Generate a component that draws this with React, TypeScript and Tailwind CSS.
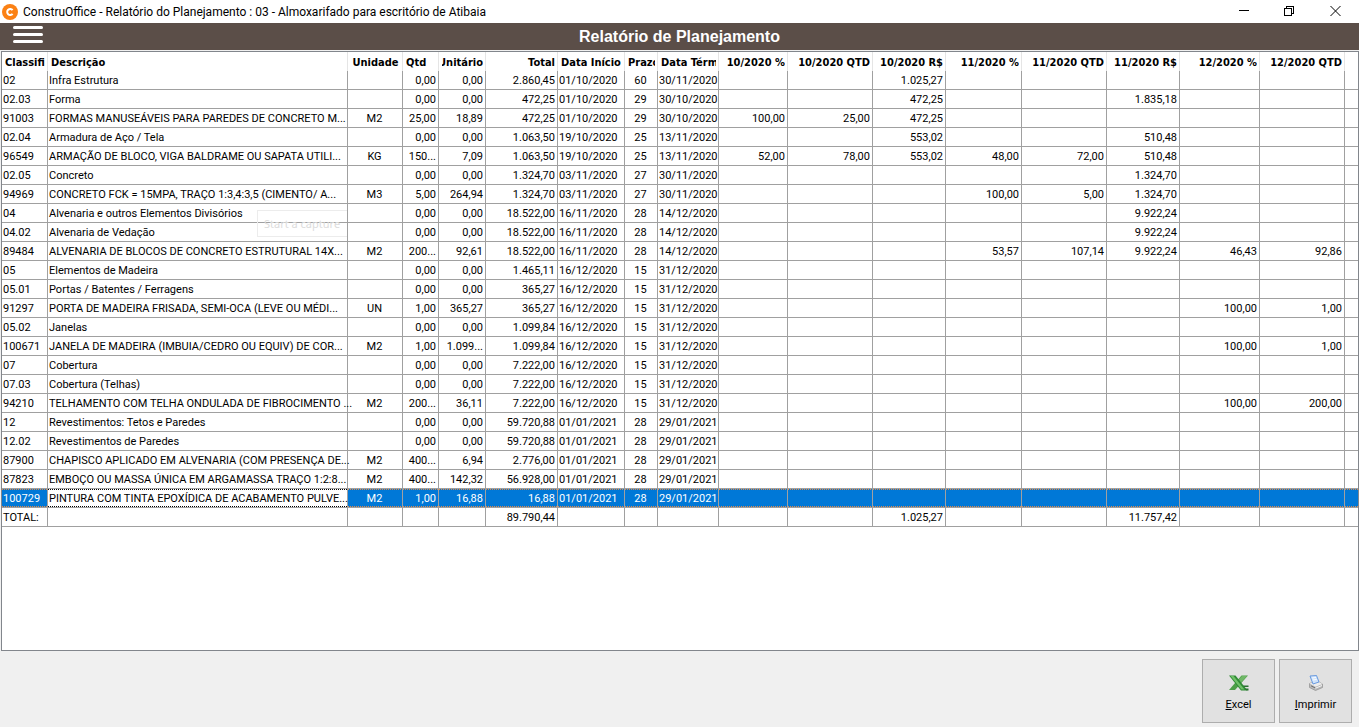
import React, { useState } from 'react';

type Align = 'left' | 'center' | 'right';

interface Column {
  title: string;
  width: string;
  align: Align;
  headAlign: Align;
}

const columns: Column[] = [
  { title: 'Classifi', width: 'w-[46px]', align: 'left', headAlign: 'left' },
  { title: 'Descrição', width: 'w-[300px]', align: 'left', headAlign: 'left' },
  { title: 'Unidade', width: 'w-[55px]', align: 'center', headAlign: 'center' },
  { title: 'Qtd', width: 'w-[36px]', align: 'right', headAlign: 'left' },
  { title: 'Unitário', width: 'w-[47px]', align: 'right', headAlign: 'right' },
  { title: 'Total', width: 'w-[72px]', align: 'right', headAlign: 'right' },
  { title: 'Data Início', width: 'w-[67px]', align: 'left', headAlign: 'left' },
  { title: 'Prazo', width: 'w-[33px]', align: 'center', headAlign: 'left' },
  { title: 'Data Térm', width: 'w-[61px]', align: 'left', headAlign: 'left' },
  { title: '10/2020 %', width: 'w-[69px]', align: 'right', headAlign: 'right' },
  { title: '10/2020 QTD', width: 'w-[85px]', align: 'right', headAlign: 'right' },
  { title: '10/2020 R$', width: 'w-[73px]', align: 'right', headAlign: 'right' },
  { title: '11/2020 %', width: 'w-[76px]', align: 'right', headAlign: 'right' },
  { title: '11/2020 QTD', width: 'w-[85px]', align: 'right', headAlign: 'right' },
  { title: '11/2020 R$', width: 'w-[73px]', align: 'right', headAlign: 'right' },
  { title: '12/2020 %', width: 'w-[80px]', align: 'right', headAlign: 'right' },
  { title: '12/2020 QTD', width: 'w-[85px]', align: 'right', headAlign: 'right' },
];

const rows: string[][] = [
  ['02', 'Infra Estrutura', '', '0,00', '0,00', '2.860,45', '01/10/2020', '60', '30/11/2020', '', '', '1.025,27'],
  ['02.03', 'Forma', '', '0,00', '0,00', '472,25', '01/10/2020', '29', '30/10/2020', '', '', '472,25', '', '', '1.835,18'],
  ['91003', 'FORMAS MANUSEÁVEIS PARA PAREDES DE CONCRETO M...', 'M2', '25,00', '18,89', '472,25', '01/10/2020', '29', '30/10/2020', '100,00', '25,00', '472,25'],
  ['02.04', 'Armadura de Aço / Tela', '', '0,00', '0,00', '1.063,50', '19/10/2020', '25', '13/11/2020', '', '', '553,02', '', '', '510,48'],
  ['96549', 'ARMAÇÃO DE BLOCO, VIGA BALDRAME OU SAPATA UTILI...', 'KG', '150...', '7,09', '1.063,50', '19/10/2020', '25', '13/11/2020', '52,00', '78,00', '553,02', '48,00', '72,00', '510,48'],
  ['02.05', 'Concreto', '', '0,00', '0,00', '1.324,70', '03/11/2020', '27', '30/11/2020', '', '', '', '', '', '1.324,70'],
  ['94969', 'CONCRETO FCK = 15MPA, TRAÇO 1:3,4:3,5 (CIMENTO/ A...', 'M3', '5,00', '264,94', '1.324,70', '03/11/2020', '27', '30/11/2020', '', '', '', '100,00', '5,00', '1.324,70'],
  ['04', 'Alvenaria e outros Elementos Divisórios', '', '0,00', '0,00', '18.522,00', '16/11/2020', '28', '14/12/2020', '', '', '', '', '', '9.922,24'],
  ['04.02', 'Alvenaria de Vedação', '', '0,00', '0,00', '18.522,00', '16/11/2020', '28', '14/12/2020', '', '', '', '', '', '9.922,24'],
  ['89484', 'ALVENARIA DE BLOCOS DE CONCRETO ESTRUTURAL 14X...', 'M2', '200...', '92,61', '18.522,00', '16/11/2020', '28', '14/12/2020', '', '', '', '53,57', '107,14', '9.922,24', '46,43', '92,86'],
  ['05', 'Elementos de Madeira', '', '0,00', '0,00', '1.465,11', '16/12/2020', '15', '31/12/2020'],
  ['05.01', 'Portas / Batentes / Ferragens', '', '0,00', '0,00', '365,27', '16/12/2020', '15', '31/12/2020'],
  ['91297', 'PORTA DE MADEIRA FRISADA, SEMI-OCA (LEVE OU MÉDI...', 'UN', '1,00', '365,27', '365,27', '16/12/2020', '15', '31/12/2020', '', '', '', '', '', '', '100,00', '1,00'],
  ['05.02', 'Janelas', '', '0,00', '0,00', '1.099,84', '16/12/2020', '15', '31/12/2020'],
  ['100671', 'JANELA DE MADEIRA (IMBUIA/CEDRO OU EQUIV) DE COR...', 'M2', '1,00', '1.099...', '1.099,84', '16/12/2020', '15', '31/12/2020', '', '', '', '', '', '', '100,00', '1,00'],
  ['07', 'Cobertura', '', '0,00', '0,00', '7.222,00', '16/12/2020', '15', '31/12/2020'],
  ['07.03', 'Cobertura (Telhas)', '', '0,00', '0,00', '7.222,00', '16/12/2020', '15', '31/12/2020'],
  ['94210', 'TELHAMENTO COM TELHA ONDULADA DE FIBROCIMENTO ...', 'M2', '200...', '36,11', '7.222,00', '16/12/2020', '15', '31/12/2020', '', '', '', '', '', '', '100,00', '200,00'],
  ['12', 'Revestimentos: Tetos e Paredes', '', '0,00', '0,00', '59.720,88', '01/01/2021', '28', '29/01/2021'],
  ['12.02', 'Revestimentos de Paredes', '', '0,00', '0,00', '59.720,88', '01/01/2021', '28', '29/01/2021'],
  ['87900', 'CHAPISCO APLICADO EM ALVENARIA (COM PRESENÇA DE...', 'M2', '400...', '6,94', '2.776,00', '01/01/2021', '28', '29/01/2021'],
  ['87823', 'EMBOÇO OU MASSA ÚNICA EM ARGAMASSA TRAÇO 1:2:8...', 'M2', '400...', '142,32', '56.928,00', '01/01/2021', '28', '29/01/2021'],
  ['100729', 'PINTURA COM TINTA EPOXÍDICA DE ACABAMENTO PULVE...', 'M2', '1,00', '16,88', '16,88', '01/01/2021', '28', '29/01/2021'],
];

const totals = ['TOTAL:', '', '', '', '', '89.790,44', '', '', '', '', '', '1.025,27', '', '', '11.757,42'];

const justify: Record<Align, string> = {
  left: 'justify-start',
  center: 'justify-center',
  right: 'justify-end',
};

// dotted lines above and below the selected row
const selectedDots = 'bg-[repeating-linear-gradient(90deg,#e08a4a_0_1px,#0078d7_1px_2px)]';
const focusDots = 'bg-[repeating-linear-gradient(90deg,#000_0_1px,#fff_1px_2px)]';

function TitleBar() {
  return (
    <header className="flex h-[23px] items-center bg-white">
      <svg className="ml-[2px] h-4 w-4" viewBox="0 0 16 16">
        <circle cx="8" cy="8" r="8" fill="#fb8114" />
        <path d="M10.600 6.200A3 3 0 1 0 10.600 9.800" fill="none" stroke="#fff" strokeWidth="2" />
      </svg>
      <span className="ml-[5px] font-[Roboto,sans-serif] text-[12px] leading-4">
        ConstruOffice - Relatório do Planejamento : 03 - Almoxarifado para escritório de Atibaia
      </span>
      <div className="ml-auto flex h-full items-center">
        <button type="button" aria-label="Minimizar" className="flex h-full w-[45px] items-center justify-center">
          <svg className="h-[11px] w-[11px]" viewBox="0 0 11 11" fill="none" stroke="#000" shapeRendering="crispEdges">
            <path d="M0 4.5h10" />
          </svg>
        </button>
        <button type="button" aria-label="Restaurar" className="flex h-full w-[45px] items-center justify-center">
          <svg className="h-[11px] w-[11px]" viewBox="0 0 11 11" fill="none" stroke="#000" shapeRendering="crispEdges">
            <path d="M.5 2.5h7v7h-7zM2.5 2.5v-2h7v7h-2" />
          </svg>
        </button>
        <button type="button" aria-label="Fechar" className="flex h-full w-[47px] items-center justify-center">
          <svg className="h-[11px] w-[11px]" viewBox="0 0 11 11" fill="none" stroke="#000">
            <path d="M.5 0l10 10M10.5 0l-10 10" />
          </svg>
        </button>
      </div>
    </header>
  );
}

function ExcelIcon() {
  return (
    <svg className="h-4 w-5" viewBox="0 0 20 16">
      <path d="M12.500 0.500h6.500l-13 14.500H0z" fill="#4d9e48" />
      <path d="M13 1h5l-6 6.500-2.500-2.500z" fill="#6fb867" />
      <path d="M0 0.500h6.500L18.500 15.500h-6.500z" fill="#2f8a35" />
      <path d="M1.500 1h3L15.500 14.500h-3z" fill="#6fc168" />
      <path d="M14 10.500h5.500v1.500h-4.300zM16 13.500h3.500v2h-2z" fill="#2b7031" />
    </svg>
  );
}

function PrinterIcon() {
  return (
    <svg className="h-4 w-5" viewBox="0 0 20 16">
      <path d="M3.500 8.500L11 6l5.500 3v3.500L9.500 15.500 3.500 12.500z" fill="#b9b9b9" stroke="#8f8f8f" strokeWidth=".7" />
      <path d="M3.500 8.500L11 6l5.500 3-7 2.800z" fill="#ececec" />
      <path d="M4 1L10.500 0.500l2.500 6.500-6 2z" fill="#cfe3fb" stroke="#5f93dd" strokeWidth=".9" />
      <path d="M6 3l4-.5M6.800 5l4-.6" stroke="#fff" strokeWidth=".9" />
      <path d="M9.500 13.200l6.500-2.700" stroke="#f5f5f5" />
      <path d="M5 10.800l4 2" stroke="#6e6e6e" />
    </svg>
  );
}

export default function App() {
  const [selected, setSelected] = useState('100729');

  const renderCells = (row: string[], isSelected: boolean) =>
    columns.map((col, i) => {
      const focused = isSelected && i === 1;
      let dots = '';
      let look = '';
      if (focused) {
        dots = focusDots;
        look = 'bg-white';
      } else if (isSelected) {
        dots = selectedDots;
        look = 'bg-[#0078d7] text-white';
      }
      return (
        <td key={col.title} className="h-[19px] border-r border-b border-[#a0a0a0] p-0">
          <div className={`py-px ${dots}`}>
            <div className={`flex h-4 items-center pt-[2px] pr-[2px] pl-px whitespace-nowrap ${justify[col.align]} ${look}`}>
              {row[i] || ''}
            </div>
          </div>
        </td>
      );
    });

  return (
    <div className="flex min-h-screen flex-col bg-[#f0f0f0] font-[Roboto,sans-serif] text-[11px] leading-4 text-black">
      <TitleBar />

      {/* Report header */}
      <div className="grid h-[27px] grid-cols-[1fr_auto_1fr] items-center bg-[#5b4e48]">
        <button type="button" aria-label="Menu" className="mt-[3px] ml-[13px] flex w-[30px] flex-col gap-1 self-start">
          <span className="h-[3px] rounded-sm bg-white" />
          <span className="h-[3px] rounded-sm bg-white" />
          <span className="h-[3px] rounded-sm bg-white" />
        </button>
        <h1 className="font-['Liberation_Sans',sans-serif] text-[16px] leading-5 font-bold text-white">
          Relatório de Planejamento
        </h1>
      </div>

      {/* Grid */}
      <main className="relative mt-px ml-px flex-1 overflow-hidden border border-[#82868c] bg-white">
        <table className="w-full table-fixed border-separate border-spacing-0">
          <thead>
            <tr>
              {columns.map((col) => (
                <th key={col.title} className={`h-[19px] border-r border-[#e5e5e5] p-0 pr-[2px] pl-[3px] ${col.width}`}>
                  <div className={`flex h-[19px] items-center overflow-hidden pt-[2px] font-['DejaVu_Sans_Condensed',sans-serif] font-bold whitespace-nowrap ${justify[col.headAlign]}`}>
                    {col.title}
                  </div>
                </th>
              ))}
              <th className="p-0" />
            </tr>
          </thead>
          <tbody>
            {rows.map((row) => (
              <tr key={row[0]} onClick={() => setSelected(row[0])}>
                {renderCells(row, row[0] === selected)}
                <td className="border-b border-[#a0a0a0] p-0">
                  <div className={`py-px ${row[0] === selected ? selectedDots : ''}`}>
                    <div className={`h-4 ${row[0] === selected ? 'bg-[#0078d7]' : ''}`} />
                  </div>
                </td>
              </tr>
            ))}
          </tbody>
          <tfoot>
            <tr>
              {renderCells(totals, false)}
              <td className="border-b border-[#a0a0a0] p-0" />
            </tr>
          </tfoot>
        </table>

        <div className="pointer-events-none absolute top-[158px] left-[255px] h-[27px] w-[90px] border border-r-0 border-[#ececec] pt-[5px] pl-[6px] font-['Noto_Sans',sans-serif] text-[11px] leading-4 text-[#dcdcdc]">
          Start a capture
        </div>
      </main>

      {/* Actions */}
      <footer className="flex h-[76px] justify-end gap-1 pt-2 pr-[7px]">
        <button type="button" className="flex h-16 w-[73px] flex-col items-center justify-center gap-[6px] border border-[#adadad] bg-[#e1e1e1] pt-[6px]">
          <ExcelIcon />
          <span><u>E</u>xcel</span>
        </button>
        <button type="button" className="flex h-16 w-[73px] flex-col items-center justify-center gap-[6px] border border-[#adadad] bg-[#e1e1e1] pt-[6px]">
          <PrinterIcon />
          <span><u>I</u>mprimir</span>
        </button>
      </footer>
    </div>
  );
}
